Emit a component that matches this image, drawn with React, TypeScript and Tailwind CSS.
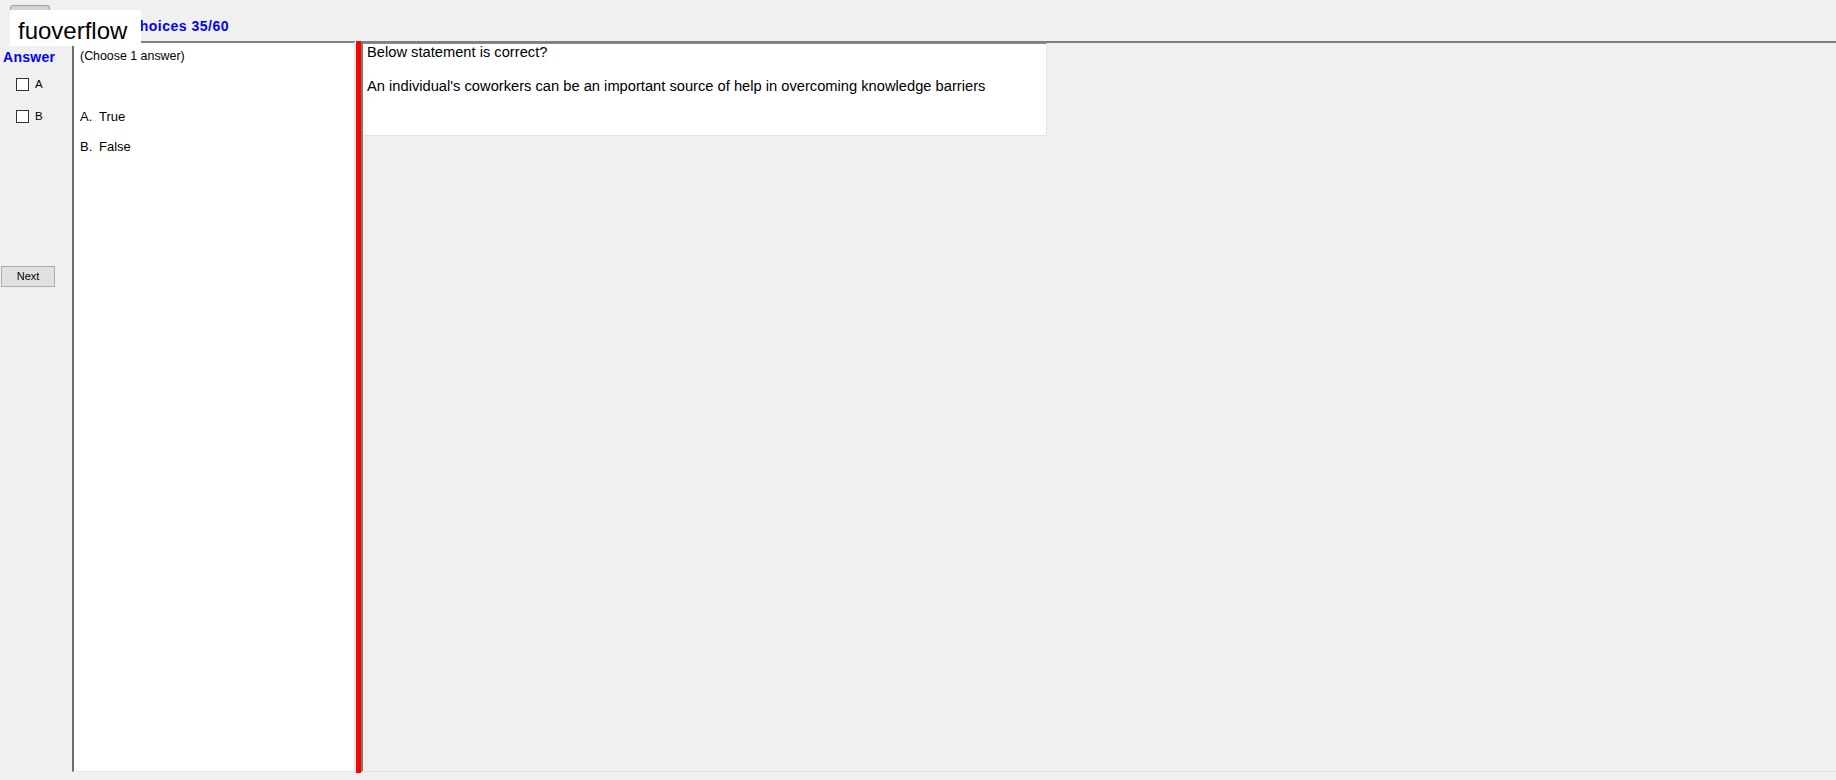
export default function App() {
  return (
    <div className="relative h-[780px] w-[1836px] overflow-hidden bg-[#f0f0f0] font-['Liberation_Sans',Arial,sans-serif] text-black">
      {/* header: tab + title */}
      <div className="flex h-[41px] items-start pl-[10px] pt-[5px]">
        <div className="h-[36px] w-[40px] rounded-t-[3px] border border-b-0 border-[#a0a0a0] bg-[#d4d4d4]" />
        <div className="mt-[13px] w-[179px] text-right text-[14px] font-bold leading-[16px] tracking-[0.5px] text-[#0000ff]">
          Multiple choices 35/60
        </div>
      </div>

      {/* watermark */}
      <div className="absolute left-[10px] top-[10px] h-[36px] w-[131px] bg-white pl-[8px] pt-[7px] text-[24px] leading-[27px]">
        fuoverflow
      </div>

      <div className="flex h-[739px] items-start">
        {/* answer column */}
        <div className="flex w-[72px] flex-col">
          <div className="mt-[8px] pl-[3px] text-[14px] font-bold leading-[16px] tracking-[0.3px] text-[#0000ff]">
            Answer
          </div>
          <label className="ml-[16px] mt-[13px] flex h-[13px] items-center gap-[6px] text-[11.5px]">
            <span className="h-[13px] w-[13px] border border-[#333333] bg-white" />
            A
          </label>
          <label className="ml-[16px] mt-[19px] flex h-[13px] items-center gap-[6px] text-[11.5px]">
            <span className="h-[13px] w-[13px] border border-[#333333] bg-white" />
            B
          </label>
          <button className="ml-[1px] mt-[143px] h-[21px] w-[54px] border border-[#adadad] bg-[#e1e1e1] text-[11px] leading-[19px]">
            Next
          </button>
        </div>

        {/* choices panel */}
        <div className="h-[731px] w-[283px] border-b border-l-2 border-r border-t-2 border-b-[#e3e3e3] border-l-[#6d6d6d] border-r-[#e3e3e3] border-t-[#808080] bg-white pl-[6px] pt-[6px]">
          <div className="text-[12.4px] leading-[14px]">(Choose 1 answer)</div>
          <div className="mt-[39px] flex h-[30px] items-center text-[13px]">
            <span className="w-[19px]">A.</span>
            <span>True</span>
          </div>
          <div className="flex h-[30px] items-center text-[13px]">
            <span className="w-[19px]">B.</span>
            <span>False</span>
          </div>
        </div>

        {/* splitter */}
        <div className="ml-[1px] h-[732px] w-[5px] bg-[#ff0000]" />

        {/* question area */}
        <div className="h-[731px] flex-1 border-b border-l-2 border-t-2 border-b-[#e3e3e3] border-l-[#7a7a7a] border-t-[#808080]">
          <div className="h-[93px] w-[684px] border-b border-r border-t border-b-[#e3e3e3] border-r-[#e3e3e3] border-t-[#8a8a8a] bg-white pl-[4px] text-[14.7px] leading-[17px]">
            <p>Below statement is correct?</p>
            <p className="mt-[17px]">
              An individual's coworkers can be an important source of help in overcoming knowledge barriers
            </p>
          </div>
        </div>
      </div>
    </div>
  );
}
